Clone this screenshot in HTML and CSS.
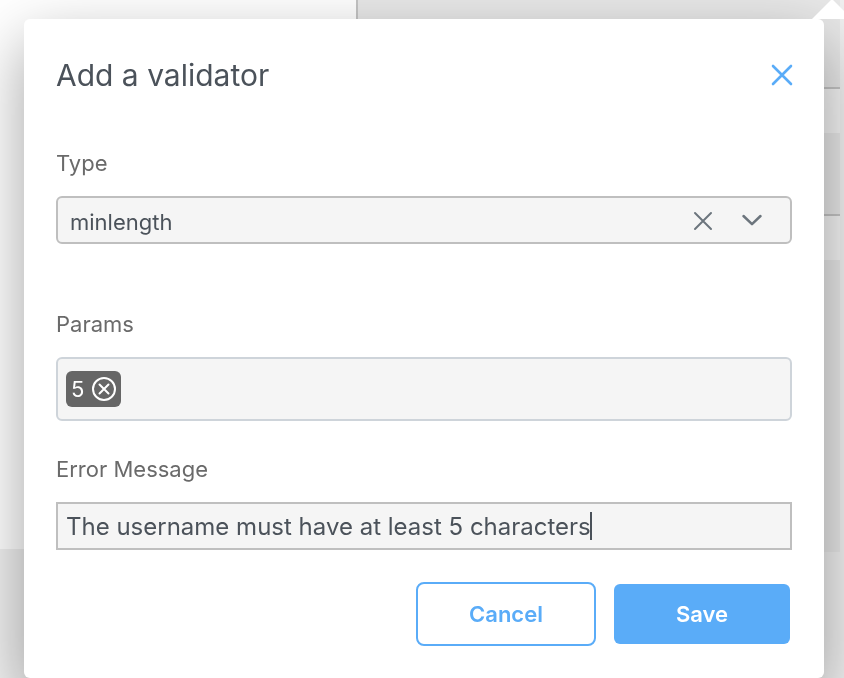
FILE: index.html
```html
<!DOCTYPE html>
<html lang="en">
<head>
<meta charset="utf-8">
<meta name="viewport" content="width=device-width, initial-scale=1">
<title>Add a validator</title>
<link rel="stylesheet" href="styles.css">
</head>
<body>
<div class="backdrop" aria-hidden="true">
  <div class="canvas"><div class="canvas-page"></div></div>
  <div class="inspector">
    <div class="inspector-head"></div>
    <div class="inspector-field"></div>
    <div class="inspector-gap"></div>
    <div class="inspector-field"></div>
    <div class="inspector-rest"></div>
  </div>
</div>
<main class="dialog" role="dialog" aria-labelledby="dialog-title">
  <span class="pointer"></span>
  <header class="dialog-header">
    <h1 id="dialog-title" class="title">Add a validator</h1>
    <button type="button" class="icon-button close" aria-label="Close">
      <svg width="20" height="20" viewBox="0 0 20 20"><path d="M1 1 19 19M19 1 1 19"/></svg>
    </button>
  </header>
  <form class="form">
    <div class="field field-type">
      <label class="label" for="type">Type</label>
      <div class="control">
        <select id="type" class="input select"><option>minlength</option></select>
        <div class="select-icons">
          <button type="button" class="icon-button" aria-label="Clear">
            <svg width="18" height="18" viewBox="0 0 18 18"><path d="M1 1 17 17M17 1 1 17"/></svg>
          </button>
          <svg class="chevron" width="20" height="18" viewBox="0 0 20 18"><path d="M1.5 4 10 12.2 18.5 4"/></svg>
        </div>
      </div>
    </div>
    <div class="field">
      <label class="label" for="params">Params</label>
      <div class="tags">
        <span class="tag">5
          <button type="button" class="icon-button" aria-label="Remove 5">
            <svg width="24" height="24" viewBox="0 0 24 24"><circle cx="12" cy="12" r="11"/><path d="M7.5 7.5 16.5 16.5M16.5 7.5 7.5 16.5"/></svg>
          </button>
        </span>
        <input id="params" class="tag-input" type="text">
      </div>
    </div>
    <div class="field">
      <label class="label" for="message">Error Message</label>
      <div class="control">
        <input id="message" class="input message" type="text" value="The username must have at least 5 characters">
        <span class="caret"></span>
      </div>
    </div>
    <div class="actions">
      <button type="button" class="button button-outline">Cancel</button>
      <button type="submit" class="button button-primary">Save</button>
    </div>
  </form>
</main>
</body>
</html>
```
FILE: styles.css
```css
* {
  box-sizing: border-box;
}

body {
  margin: 0;
  min-height: 100vh;
  overflow: hidden;
  font-family: Inter, "Liberation Sans", sans-serif;
  font-size: 22px;
  color: #4b525a;
  background: #f0f0f0;
}

button,
input,
select {
  margin: 0;
  font: inherit;
  color: inherit;
}

svg {
  display: block;
  overflow: visible;
  fill: none;
  stroke: currentColor;
  stroke-width: 2;
  stroke-linecap: round;
  stroke-linejoin: round;
}

.backdrop {
  position: fixed;
  inset: 0;
  display: grid;
  grid-template-columns: 358px 1fr;
}

.canvas {
  background: #f0f0f0;
}

.canvas-page {
  height: 549px;
  background: #fff;
  border-right: 2px solid #c4c4c4;
}

.inspector {
  margin-right: 4px;
  display: flex;
  flex-direction: column;
}

.inspector-head {
  height: 87px;
  background: #e8e8e8;
}

.inspector-field {
  height: 46px;
  background: #f4f4f4;
  border-top: 2px solid #c4c4c4;
}

.inspector-gap {
  height: 81px;
  background: #e8e8e8;
}

.inspector-rest {
  height: 292px;
  background: #e8e8e8;
}

.dialog {
  position: relative;
  margin: 19px 20px 0 24px;
  padding: 32px;
  background: #fff;
  border-radius: 6px;
  box-shadow: 0 24px 64px rgba(0, 0, 0, 0.37);
}

.pointer {
  position: absolute;
  right: -28px;
  bottom: 100%;
  border: 20px solid transparent;
  border-top-width: 0;
  border-bottom-color: #fff;
}

.dialog-header {
  display: flex;
  justify-content: space-between;
  align-items: center;
  height: 48px;
  margin-bottom: 48px;
}

.title {
  margin: 0;
  font-size: 30px;
  font-weight: 400;
}

.icon-button {
  padding: 0;
  border: 0;
  background: none;
}

.close {
  color: #5aacf8;
}

.close svg {
  stroke-width: 2.6;
}

.field {
  margin-bottom: 32px;
}

.field-type {
  margin-bottom: 64px;
}

.label {
  display: block;
  height: 33px;
  margin-bottom: 16px;
  line-height: 33px;
  color: #6a6a6a;
}

.control {
  position: relative;
}

.input {
  display: block;
  width: 100%;
  height: 48px;
  background: #f5f5f5;
  border: 2px solid #bfbfbf;
  outline: 0;
}

.select {
  appearance: none;
  padding: 4px 12px 0;
  border-radius: 6px;
}

.select-icons {
  position: absolute;
  top: 0;
  right: 30px;
  height: 100%;
  padding-top: 2px;
  display: flex;
  align-items: center;
  gap: 30px;
  color: #6c757d;
  pointer-events: none;
}

.select-icons button {
  pointer-events: auto;
}

.chevron {
  stroke-width: 2.5;
}

.tags {
  display: flex;
  align-items: center;
  height: 64px;
  padding: 0 8px;
  background: #f5f5f5;
  border: 2px solid #ced4da;
  border-radius: 6px;
}

.tag {
  display: flex;
  align-items: center;
  gap: 8px;
  height: 36px;
  padding: 0 5px;
  border-radius: 6px;
  background: #666;
  color: #fff;
}

.tag-input {
  flex: 1;
  min-width: 0;
  border: 0;
  background: none;
  outline: 0;
}

.message {
  padding: 0 8px;
  font-size: 24px;
}

.caret {
  position: absolute;
  top: 10px;
  left: 534px;
  width: 2px;
  height: 28px;
  background: #4b525a;
}

.actions {
  display: flex;
  justify-content: flex-end;
  gap: 16px;
}

.button {
  width: 180px;
  height: 64px;
  border: 2px solid transparent;
  border-radius: 8px;
  font-weight: 600;
}

.button-outline {
  background: #fff;
  border-color: #5aacf8;
  color: #5aacf8;
}

.button-primary {
  background: #5aacf8;
  background-clip: padding-box;
  color: #fff;
}
```
